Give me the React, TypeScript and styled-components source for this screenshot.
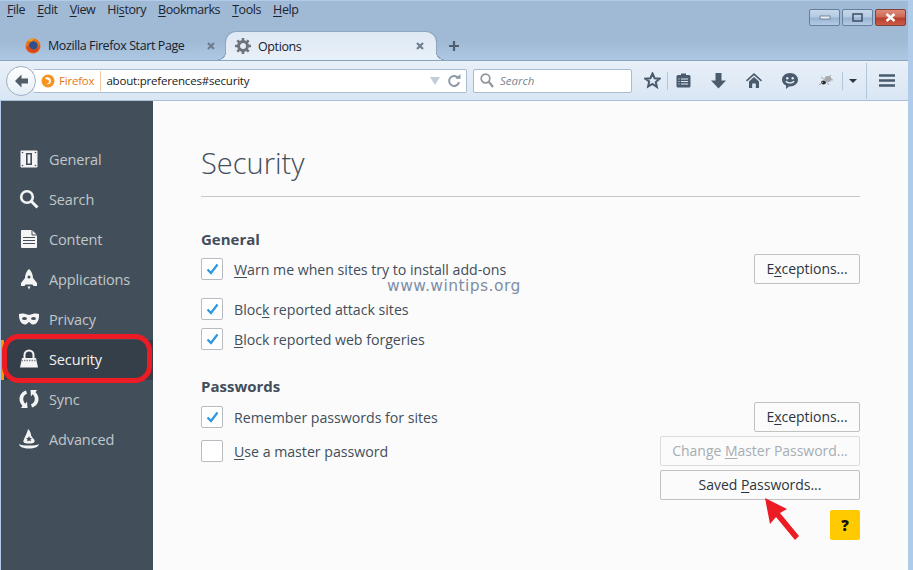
import React from "react";
import styled, { css, createGlobalStyle } from "styled-components";

const GlobalStyle = createGlobalStyle`
  html, body { margin: 0; padding: 0; overflow: hidden; background: #fff; }
  body { font-family: "Open Sans", "Noto Sans", sans-serif; }
  u { text-underline-offset: 2px; }
`;

const Window = styled.div`
  position: relative;
  width: 913px;
  height: 570px;
  display: flex;
  flex-direction: column;
  overflow: hidden;
  background: #b0cbea;
  padding: 1px 5px 0 1px;
  box-sizing: border-box;
`;

const TitleBar = styled.div`
  height: 59px;
  margin: 0 0 0 -1px;
  width: 908px;
  flex-shrink: 0;
  display: flex;
  flex-direction: column;
  background: linear-gradient(#a0b9d5 0, #a0b9d5 40px, #aec8e4 59px);
`;

const MenuBar = styled.div`
  display: flex;
  gap: 12px;
  height: 18px;
  padding: 0 0 0 7px;
  font-size: 12.5px;
  letter-spacing: -0.42px;
  line-height: 18px;
  color: #1c2430;
`;

const Tabs = styled.div`
  display: flex;
  align-items: flex-end;
  height: 30px;
  margin-top: 11px;
`;

const activeTab = css`
  position: relative;
  border: 1px solid #8da6c1;
  border-bottom: none;
  border-radius: 11px 11px 0 0;
  background: linear-gradient(#dfe9f4, #e8f0f8);

  &::before,
  &::after {
    content: "";
    position: absolute;
    bottom: 0;
    width: 8px;
    height: 8px;
  }
  &::before {
    left: -8px;
    background: radial-gradient(circle at 0 0, transparent 7px, #8da6c1 7px, #8da6c1 8px, #e6eef7 8px);
  }
  &::after {
    right: -8px;
    background: radial-gradient(circle at 100% 0, transparent 7px, #8da6c1 7px, #8da6c1 8px, #e6eef7 8px);
  }
`;

const Tab = styled.div<{ $active?: boolean }>`
  display: flex;
  align-items: center;
  box-sizing: border-box;
  height: 29px;
  font-size: 12.5px;
  letter-spacing: -0.4px;
  color: #15202c;
  width: ${(p) => (p.$active ? "212px" : "225px")};
  padding: ${(p) => (p.$active ? "0 12px 0 9px" : "0 10px 0 25px")};
  ${(p) => p.$active && activeTab}
`;

const TabTitle = styled.span`
  flex: 1;
  margin-left: 7px;
  white-space: nowrap;
`;

const CaptionButtons = styled.div`
  position: absolute;
  top: 9px;
  right: 7px;
  display: flex;
  gap: 2px;
`;

const CaptionButton = styled.div<{ $close?: boolean }>`
  width: 29px;
  height: 15px;
  display: flex;
  align-items: center;
  justify-content: center;
  border-radius: 2px;
  border: 1px solid ${(p) => (p.$close ? "#7d4138" : "#65809e")};
  background: ${(p) =>
    p.$close
      ? "linear-gradient(#dc8a7b 0, #cf6a58 45%, #b8402c 55%, #cb5a48 100%)"
      : "linear-gradient(#c6d7ea 0, #b6cbe2 45%, #9ab4d1 55%, #b4cbe4 100%)"};
`;

const NavBar = styled.div`
  height: 41px;
  margin-left: -1px;
  width: 908px;
  flex-shrink: 0;
  box-sizing: border-box;
  border-top: 1px solid #8aa3bd;
  border-bottom: 1px solid #a9c0d8;
  background: linear-gradient(#e8f0f8, #d9e6f4);
  display: flex;
  align-items: center;
  padding-left: 6px;
`;

const BackButton = styled.div`
  width: 30px;
  height: 30px;
  border-radius: 50%;
  border: 1px solid #9fb1c5;
  background: linear-gradient(#ffffff, #e6eef7);
  display: flex;
  align-items: center;
  justify-content: center;
  z-index: 1;
  flex-shrink: 0;
  box-sizing: border-box;
`;

const UrlBar = styled.div`
  width: 433px;
  height: 24px;
  margin-left: -2px;
  box-sizing: border-box;
  background: #fff;
  border: 1px solid #a9bbcf;
  border-left: none;
  border-radius: 0 2px 2px 0;
  display: flex;
  align-items: center;
  padding: 0 0 0 7px;
  font-size: 11.5px;
  letter-spacing: -0.2px;
  color: #1a1a1a;
`;

const Identity = styled.span`
  color: #e8770f;
  margin-left: 4px;
  padding-right: 6px;
  height: 20px;
  line-height: 20px;
  border-right: 1px solid #f2c9a0;
  margin-right: 5px;
  font-size: 11.5px;
`;

const UrlText = styled.span`
  flex: 1;
  white-space: nowrap;
`;

const SearchBox = styled.div`
  width: 159px;
  height: 24px;
  margin-left: 6px;
  box-sizing: border-box;
  background: #fff;
  border: 1px solid #a9bbcf;
  border-radius: 2px;
  display: flex;
  align-items: center;
  gap: 6px;
  padding-left: 6px;
  font-size: 11.5px;
  font-style: italic;
  color: #7a8694;
`;

const ToolIcons = styled.div`
  display: flex;
  align-items: center;
  height: 100%;
  margin-left: 12px;
  flex: 1;
`;

const ToolSlot = styled.div<{ $w: number }>`
  width: ${(p) => p.$w}px;
  display: flex;
  align-items: center;
  justify-content: center;
  flex-shrink: 0;
`;

const ToolGap = styled.div<{ $w: number }>`
  width: ${(p) => p.$w}px;
  flex-shrink: 0;
`;

const ToolDivider = styled.div<{ $tall?: boolean }>`
  width: 1px;
  height: ${(p) => (p.$tall ? "36px" : "18px")};
  background: #b4c6da;
  flex-shrink: 0;
`;

const Body = styled.div`
  flex: 1;
  display: flex;
  min-height: 0;
`;

const Sidebar = styled.nav`
  width: 152px;
  flex-shrink: 0;
  background: #424f5a;
  padding-top: 39px;
  box-sizing: border-box;
`;

const NavItem = styled.div<{ $active?: boolean }>`
  position: relative;
  height: 40px;
  box-sizing: border-box;
  display: flex;
  align-items: center;
  gap: 9px;
  padding-bottom: 2px;
  font-size: 14.5px;
  letter-spacing: -0.12px;
  color: ${(p) => (p.$active ? "#f2f2f2" : "#c1c7cb")};
  background: ${(p) => (p.$active ? "#343f4a" : "transparent")};
  border-left: ${(p) => (p.$active ? "3px solid #ff9500" : "none")};
  padding-left: ${(p) => (p.$active ? "14px" : "17px")};
`;

const NavIconBox = styled.div`
  width: 22px;
  height: 22px;
  display: flex;
  align-items: center;
  justify-content: center;
`;

const Ring = styled.div`
  position: absolute;
  left: -2px;
  top: -6px;
  width: 150px;
  height: 49px;
  box-sizing: border-box;
  border: 5px solid #ed1c24;
  border-radius: 17px;
`;

const Content = styled.main`
  flex: 1;
  background: #fbfbfb;
  padding: 39px 48px 0 48px;
  color: #424e5a;
`;

const Title = styled.h1`
  margin: 0;
  height: 57px;
  box-sizing: border-box;
  font-weight: 300;
  font-size: 29px;
  line-height: 46px;
  color: #424e5a;
  border-bottom: 1px solid #c8c8c8;
`;

const SectionTitle = styled.h2<{ $top: number }>`
  margin: ${(p) => p.$top}px 0 0;
  font-size: 15px;
  line-height: 20px;
  height: 20px;
  font-weight: 700;
  color: #424e5a;
`;

const Row = styled.div<{ $h: number; $top?: number; $end?: boolean }>`
  display: flex;
  align-items: center;
  justify-content: ${(p) => (p.$end ? "flex-end" : "space-between")};
  height: ${(p) => p.$h}px;
  margin-top: ${(p) => p.$top ?? 0}px;
`;

const CheckLabel = styled.label`
  display: flex;
  align-items: center;
  gap: 11px;
  font-size: 14.2px;
  letter-spacing: -0.03px;
  color: #424e5a;
`;

const CheckBox = styled.span`
  width: 22px;
  height: 22px;
  box-sizing: border-box;
  border: 1px solid #b8bcc0;
  border-radius: 2px;
  background: #fff;
  display: flex;
  align-items: center;
  justify-content: center;
`;

const Button = styled.button<{ $wide?: boolean; $disabled?: boolean }>`
  box-sizing: border-box;
  width: ${(p) => (p.$wide ? "200px" : "106px")};
  height: 30px;
  padding: 0 0 2px;
  font-family: inherit;
  font-size: 14px;
  letter-spacing: -0.03px;
  background: #fbfbfb;
  color: ${(p) => (p.$disabled ? "#a6adb3" : "#2b3540")};
  border: 1px solid ${(p) => (p.$disabled ? "#dcdcdc" : "#c1c1c1")};
  border-radius: 2px;
`;

const HelpButton = styled.div`
  width: 30px;
  height: 30px;
  background: #ffcb00;
  border-radius: 2px;
  font-size: 15px;
  font-weight: 800;
  color: #111;
  display: flex;
  align-items: center;
  justify-content: center;
`;

const Watermark = styled.div`
  position: absolute;
  left: 387px;
  top: 277px;
  font-family: "DejaVu Sans", sans-serif;
  font-size: 15.5px;
  letter-spacing: 0.45px;
  color: #7e8ea6;
`;

const Arrow = styled.svg`
  position: absolute;
  left: 760px;
  top: 494px;
`;

const PlusIcon = styled.svg`
  margin: 0 0 7px 10px;
`;

const ReloadIcon = styled.svg`
  margin: 0 5px 0 7px;
`;

const Check = () => (
  <svg width="13" height="12" viewBox="0 0 13 12">
    <path d="M1.5 6.5 L5 10 L11.5 1.5" fill="none" stroke="#2a97e0" strokeWidth="2.2" />
  </svg>
);

const FirefoxLogo = () => (
  <svg width="16" height="16" viewBox="0 0 16 16">
    <circle cx="8" cy="8" r="7.5" fill="#e8701a" />
    <circle cx="8.3" cy="7.6" r="4.4" fill="#2d4f8e" />
    <path d="M1 9c1 4 5 6.5 9 5.5s5-5 4.5-8c-.5 3-3 5-5.5 5S4.500 9.500 4 7.500C3 8 2 8.500 1 9z" fill="#d9471a" />
    <path d="M3 2.500C5 .5 8 0 10.500 1c-2 .2-3.500 1-4 2.500-1.500 0-2.800-.2-3.500-1z" fill="#f6a01e" />
  </svg>
);

const GearIcon = () => (
  <svg width="16" height="16" viewBox="0 0 16 16">
    <circle cx="8" cy="8" r="4.500" fill="none" stroke="#6e7479" strokeWidth="3" />
    <g stroke="#6e7479" strokeWidth="2.600">
      <path d="M8 0v3M8 13v3M0 8h3M13 8h3M2.300 2.300l2.100 2.100M11.600 11.600l2.100 2.100M13.700 2.300l-2.100 2.100M4.400 11.600l-2.100 2.100" />
    </g>
  </svg>
);

const TabClose = () => (
  <svg width="8" height="8" viewBox="0 0 8 8">
    <path d="M1 1l6 6M7 1L1 7" stroke="#6f7e8d" strokeWidth="2.200" />
  </svg>
);

const navIcons: Record<string, React.ReactNode> = {
  General: (
    <svg width="18" height="18" viewBox="0 0 18 18">
      <rect x="0.500" y="0.500" width="17" height="17" rx="1" fill="#f4f4f4" />
      <rect x="6" y="3" width="6" height="12" fill="#424f5a" />
      <rect x="7.600" y="4.500" width="2.800" height="9" fill="#f4f4f4" />
      <g fill="#424f5a">
        <circle cx="2.500" cy="2.500" r=".8" /><circle cx="15.500" cy="2.500" r=".8" />
        <circle cx="2.500" cy="15.500" r=".8" /><circle cx="15.500" cy="15.500" r=".8" />
      </g>
    </svg>
  ),
  Search: (
    <svg width="20" height="20" viewBox="0 0 20 20">
      <circle cx="8" cy="8" r="5.800" fill="none" stroke="#f4f4f4" strokeWidth="2.600" />
      <path d="M12.500 12.500L18.500 18.500" stroke="#f4f4f4" strokeWidth="3" />
    </svg>
  ),
  Content: (
    <svg width="18" height="20" viewBox="0 0 18 20">
      <path d="M1 2a1 1 0 0 1 1-1h10l5 5v12a1 1 0 0 1-1 1H2a1 1 0 0 1-1-1z" fill="#f4f4f4" />
      <path d="M12 1v5h5" fill="none" stroke="#424f5a" />
      <path d="M3 8.500h12M3 11.500h12M3 14.500h12" stroke="#424f5a" strokeWidth="1.200" />
    </svg>
  ),
  Applications: (
    <svg width="18" height="21" viewBox="0 0 18 21">
      <path d="M9 0c2.500 2 4 5.500 4 9l4 5v3h-3.500l-1-1.500h-7l-1 1.500H1v-3l4-5c0-3.500 1.500-7 4-9z" fill="#f4f4f4" />
      <circle cx="9" cy="8" r="1.500" fill="#424f5a" />
      <path d="M7.500 17.500h3L9 20.500z" fill="#f4f4f4" />
    </svg>
  ),
  Privacy: (
    <svg width="20" height="12" viewBox="0 0 20 12">
      <path d="M0 1c3-1 6-.5 10 1 4-1.500 7-2 10-1 .3 5-1.500 10-5.500 10.500C12 12 11 9 10 9s-2 3-4.500 2.500C1.500 11 -.3 6 0 1z" fill="#f4f4f4" />
      <ellipse cx="5.500" cy="5.500" rx="2.500" ry="1.600" fill="#424f5a" />
      <ellipse cx="14.500" cy="5.500" rx="2.500" ry="1.600" fill="#424f5a" />
    </svg>
  ),
  Security: (
    <svg width="20" height="20" viewBox="0 0 20 20">
      <path d="M5.500 9V6a4.500 4.500 0 0 1 9 0v3" fill="none" stroke="#f4f4f4" strokeWidth="2" />
      <path d="M3 9h14l2 9.500H1z" fill="#f4f4f4" />
      <path d="M2.500 11.500h15" stroke="#7d868e" strokeWidth="1.600" strokeDasharray="1.500 1" />
    </svg>
  ),
  Sync: (
    <svg width="20" height="20" viewBox="0 0 20 20">
      <path d="M7 1.500C3.200 2.500.5 6 .5 10c0 2.800 1.300 5.200 3 6.800L2 19h6.500L8 12.500 6.300 14.700C5 13.500 4.200 11.800 4.200 10c0-2.400 1.400-4.500 3.800-5.300z" fill="#f4f4f4" />
      <path d="M13 18.500c3.800-1 6.500-4.500 6.500-8.500 0-2.800-1.300-5.200-3-6.800L18 1h-6.500l.5 6.500 1.700-2.200c1.300 1.200 2.100 2.900 2.100 4.700 0 2.400-1.400 4.500-3.800 5.300z" fill="#f4f4f4" />
    </svg>
  ),
  Advanced: (
    <svg width="20" height="20" viewBox="0 0 20 20">
      <path d="M9 0c-.5 4-3 7-4.500 11.500C4 13 4.500 14.500 10 14.500s6-1.500 5.500-3C15 9 12.500 9 12 5.500 11.500 3 10.500 1 9 0z" fill="#f4f4f4" />
      <path d="M10 7l1 2 2 .2-1.500 1.400.4 2-1.900-1-1.900 1 .4-2L7 9.200 9 9z" fill="#424f5a" />
      <path d="M0 15c1.500 1 5 1.500 10 1.500s8.500-.5 10-1.500c-.5 3-4.500 4.500-10 4.500S.5 18 0 15z" fill="#f4f4f4" />
    </svg>
  ),
};

const navNames = ["General", "Search", "Content", "Applications", "Privacy", "Security", "Sync", "Advanced"];

const toolColor = "#4a5b6d";

const App: React.FC = () => {
  return (
    <Window>
      <GlobalStyle />
      <TitleBar>
        <MenuBar>
          <span><u>F</u>ile</span>
          <span><u>E</u>dit</span>
          <span><u>V</u>iew</span>
          <span>Hi<u>s</u>tory</span>
          <span><u>B</u>ookmarks</span>
          <span><u>T</u>ools</span>
          <span><u>H</u>elp</span>
        </MenuBar>
        <Tabs>
          <Tab>
            <FirefoxLogo />
            <TabTitle>Mozilla Firefox Start Page</TabTitle>
            <TabClose />
          </Tab>
          <Tab $active>
            <GearIcon />
            <TabTitle>Options</TabTitle>
            <TabClose />
          </Tab>
          <PlusIcon width="14" height="14" viewBox="0 0 14 14">
            <path d="M7 2v10M2 7h10" stroke="#4f5f70" strokeWidth="2.200" />
          </PlusIcon>
        </Tabs>
      </TitleBar>
      <CaptionButtons>
        <CaptionButton>
          <svg width="12" height="5"><rect x="1" y="1" width="10" height="3" fill="#e8eef5" stroke="#55687e" strokeWidth=".7" /></svg>
        </CaptionButton>
        <CaptionButton>
          <svg width="11" height="9"><rect x="1" y="1" width="9" height="7" fill="none" stroke="#3d4e62" strokeWidth="1.500" /></svg>
        </CaptionButton>
        <CaptionButton $close>
          <svg width="11" height="9" viewBox="0 0 11 9"><path d="M1.500 1l8 7M9.500 1l-8 7" stroke="#fff" strokeWidth="2.400" /></svg>
        </CaptionButton>
      </CaptionButtons>

      <NavBar>
        <BackButton>
          <svg width="15" height="14" viewBox="0 0 15 14">
            <path d="M7.500 0.500L1 7l6.500 6.500V9.500H14v-5H7.500z" fill="#515d69" />
          </svg>
        </BackButton>
        <UrlBar>
          <svg width="14" height="14" viewBox="0 0 14 14">
            <circle cx="7" cy="7" r="6.500" fill="#f7931e" />
            <path d="M4.500 3.500C7 2.500 10 4 10 7c0 2.500-2.500 4-5 3 2 0 3-1 3-2.500S6.500 5 4.500 5.500z" fill="#fff" />
          </svg>
          <Identity>Firefox</Identity>
          <UrlText>about:preferences#security</UrlText>
          <svg width="10" height="8" viewBox="0 0 10 8"><path d="M0 0h10L5 8z" fill="#c4ccd5" /></svg>
          <ReloadIcon width="14" height="14" viewBox="0 0 14 14">
            <path d="M11.500 4.500A5 5 0 1 0 12 8" fill="none" stroke="#8d99a5" strokeWidth="2" />
            <path d="M8.500 4.800h5V0z" fill="#8d99a5" />
          </ReloadIcon>
        </UrlBar>
        <SearchBox>
          <svg width="14" height="15" viewBox="0 0 14 15">
            <circle cx="5.500" cy="5.500" r="4.300" fill="none" stroke="#8e969e" strokeWidth="1.700" />
            <path d="M8.800 8.800L13 14" stroke="#8e969e" strokeWidth="2.200" />
          </svg>
          Search
        </SearchBox>
        <ToolIcons>
          <ToolSlot $w={17}>
            <svg width="17" height="17" viewBox="0 0 17 17">
              <path d="M8.500 1.500l2.100 4.700 5 .5-3.800 3.300 1.100 5L8.500 12l-4.400 2.500 1.100-5L1.400 6.700l5-.5z" fill="none" stroke={toolColor} strokeWidth="2" />
            </svg>
          </ToolSlot>
          <ToolGap $w={6} />
          <ToolDivider />
          <ToolSlot $w={30}>
            <svg width="15" height="15" viewBox="0 0 15 15">
              <rect x="0.500" y="2" width="14" height="12.500" rx="1.500" fill={toolColor} />
              <rect x="5" y="0.500" width="5" height="3" fill={toolColor} />
              <path d="M5 6h7M5 8.500h7M5 11h7" stroke="#dfe9f4" strokeWidth="1.200" />
              <path d="M2.500 6h1M2.500 8.500h1M2.500 11h1" stroke="#dfe9f4" strokeWidth="1.200" />
            </svg>
          </ToolSlot>
          <ToolSlot $w={40}>
            <svg width="15" height="16" viewBox="0 0 15 16">
              <path d="M4.500 0h6v7.500H15L7.500 15.500 0 7.500h4.500z" fill={toolColor} />
            </svg>
          </ToolSlot>
          <ToolSlot $w={32}>
            <svg width="16" height="15" viewBox="0 0 16 15">
              <path d="M8 0L0 7.200l1 1.200L8 2.300l7 6.100 1-1.200z" fill={toolColor} />
              <path d="M3 8.500L8 4l5 4.500V15H9.800v-4.500H6.200V15H3z" fill={toolColor} />
            </svg>
          </ToolSlot>
          <ToolSlot $w={40}>
            <svg width="16" height="16" viewBox="0 0 16 16">
              <path d="M8 0c4.400 0 8 2.900 8 6.700s-3.600 6.700-8 6.700h-1l-3 2.600v-3.400C1.600 11.400 0 9.200 0 6.700 0 2.900 3.600 0 8 0z" fill={toolColor} />
              <circle cx="5.300" cy="5.200" r="1.200" fill="#e3ecf6" />
              <circle cx="10.700" cy="5.200" r="1.200" fill="#e3ecf6" />
              <path d="M4 8c1 2.500 7 2.500 8 0" fill="none" stroke="#e3ecf6" strokeWidth="1.300" />
            </svg>
          </ToolSlot>
          <ToolSlot $w={32}>
            <svg width="16" height="13" viewBox="0 0 16 13">
              <ellipse cx="5.500" cy="8.500" rx="2.500" ry="2" fill="#2e2e2e" />
              <ellipse cx="10" cy="5" rx="3.500" ry="3" fill="#a5a9ad" />
              <path d="M1 11l4-3M3 3l4 3M13 1l-3 3M15 6l-5-1M11 11L8 7" stroke="#a5a9ad" />
            </svg>
          </ToolSlot>
          <ToolDivider />
          <ToolSlot $w={20}>
            <svg width="8" height="4" viewBox="0 0 8 4"><path d="M0 0h8L4 4z" fill="#2c3640" /></svg>
          </ToolSlot>
          <ToolGap $w={3} />
          <ToolDivider $tall />
          <ToolSlot $w={40}>
            <svg width="16" height="13" viewBox="0 0 16 13">
              <path d="M0 1.500h16M0 6.500h16M0 11.500h16" stroke={toolColor} strokeWidth="2.600" />
            </svg>
          </ToolSlot>
        </ToolIcons>
      </NavBar>

      <Body>
        <Sidebar>
          {navNames.map((name) => (
            <NavItem key={name} $active={name === "Security"}>
              <NavIconBox>{navIcons[name]}</NavIconBox>
              {name}
              {name === "Security" && <Ring />}
            </NavItem>
          ))}
        </Sidebar>
        <Content>
          <Title>Security</Title>
          <SectionTitle $top={32}>General</SectionTitle>
          <Row $h={30} $top={5}>
            <CheckLabel><CheckBox><Check /></CheckBox><span><u>W</u>arn me when sites try to install add-ons</span></CheckLabel>
            <Button><span>E<u>x</u>ceptions...</span></Button>
          </Row>
          <Row $h={30} $top={10}>
            <CheckLabel><CheckBox><Check /></CheckBox><span>Bloc<u>k</u> reported attack sites</span></CheckLabel>
          </Row>
          <Row $h={30}>
            <CheckLabel><CheckBox><Check /></CheckBox><span><u>B</u>lock reported web forgeries</span></CheckLabel>
          </Row>
          <SectionTitle $top={22}>Passwords</SectionTitle>
          <Row $h={30} $top={6}>
            <CheckLabel><CheckBox><Check /></CheckBox><span>Remember passwords for sites</span></CheckLabel>
            <Button><span>E<u>x</u>ceptions...</span></Button>
          </Row>
          <Row $h={30} $top={4}>
            <CheckLabel><CheckBox /><span><u>U</u>se a master password</span></CheckLabel>
            <Button $wide $disabled><span>Change <u>M</u>aster Password...</span></Button>
          </Row>
          <Row $h={30} $top={4} $end>
            <Button $wide><span>Saved <u>P</u>asswords...</span></Button>
          </Row>
          <Row $h={30} $top={10} $end>
            <HelpButton>?</HelpButton>
          </Row>
        </Content>
      </Body>

      <Watermark>www.wintips.org</Watermark>
      <Arrow width="44" height="50" viewBox="0 0 44 50">
        <path d="M6 4l22 11-7 4 19 23-4 4-19-23-6 7z" fill="#ed1c24" transform="translate(-1 0)" />
      </Arrow>
    </Window>
  );
};

export default App;
